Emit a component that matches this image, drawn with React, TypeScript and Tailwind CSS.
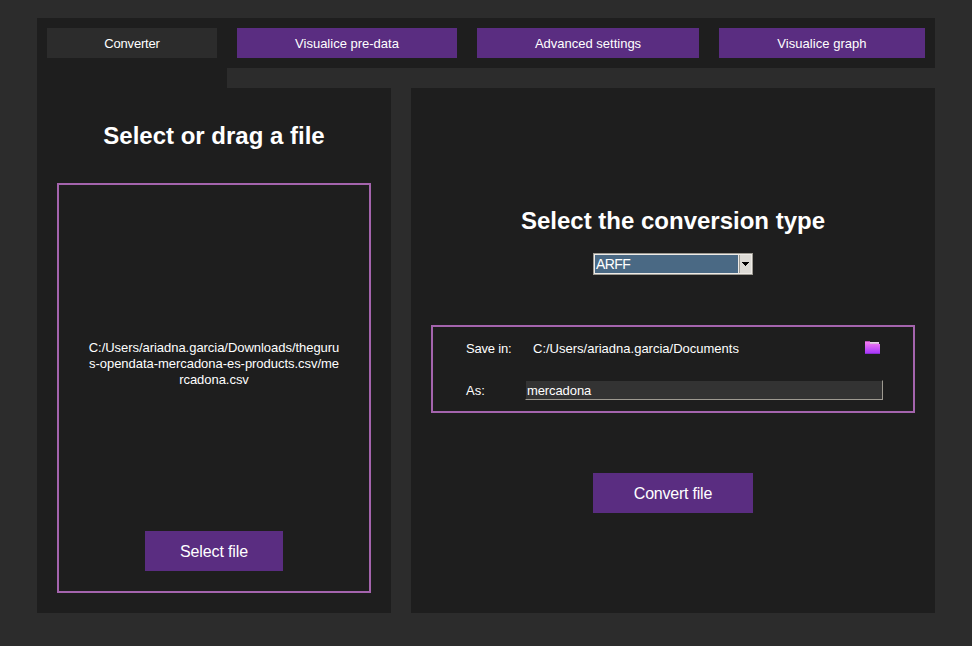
import React from "react";

const tabs = [
  { label: "Converter", style: "w-[170px] bg-[#2c2c2c] tracking-[-0.17px]" },
  { label: "Visualice pre-data", style: "w-[220px] bg-[#5a2d81]" },
  { label: "Advanced settings", style: "w-[222px] bg-[#5a2d81]" },
  { label: "Visualice graph", style: "w-[206px] bg-[#5a2d81] tracking-[0.04px]" },
];

function FolderIcon() {
  return (
    <svg className="mt-px" width="15" height="13" viewBox="0 0 15 13" shapeRendering="crispEdges">
      <defs>
        <linearGradient id="folder" x1="0" y1="0" x2="0" y2="1">
          <stop offset="0" stopColor="#f47cf0" />
          <stop offset="1" stopColor="#a838fa" />
        </linearGradient>
      </defs>
      <path d="M0 1h5v2h10v9H0z" fill="url(#folder)" />
      <path d="M0 0h5v1H0z" fill="#b552b8" />
      <path d="M5 1h9v1H5z" fill="#e6d3e8" />
      <path d="M5 2h9v1H5z" fill="#d9b5dc" />
      <path d="M0 12h15v1H0z" fill="#8a2fd0" />
    </svg>
  );
}

export default function App() {
  return (
    <div className="h-[646px] w-[972px] overflow-hidden bg-[#2c2c2c] pt-[18px] pl-[37px] font-['Liberation_Sans',Arial,sans-serif] text-[13px] leading-4 text-white">
      <div className="w-[898px]">
        <nav className="flex h-[50px] gap-5 bg-[#1e1e1e] p-2.5">
          {tabs.map((t) => (
            <button key={t.label} className={`h-[30px] shrink-0 pt-0.5 ${t.style}`}>
              {t.label}
            </button>
          ))}
        </nav>
        <div className="h-5 w-[190px] bg-[#1e1e1e]" />
        <main className="flex h-[525px] gap-5">
          <section className="flex w-[354px] flex-col bg-[#1e1e1e] px-5 pb-5">
            <h1 className="flex h-[95px] items-center justify-center text-2xl font-bold whitespace-nowrap">
              Select or drag a file
            </h1>
            <div className="flex h-[410px] flex-col items-center border-2 border-[#a464ad]">
              <p className="mt-[155px] text-center tracking-[-0.04px] whitespace-nowrap">
                C:/Users/ariadna.garcia/Downloads/theguru
                <br />
                s-opendata-mercadona-es-products.csv/me
                <br />
                rcadona.csv
              </p>
              <button className="mt-auto mb-5 h-10 w-[138px] bg-[#5a2d81] pt-0.5 text-base tracking-[-0.12px]">
                Select file
              </button>
            </div>
          </section>
          <section className="flex w-[524px] flex-col items-center bg-[#1e1e1e] px-5">
            <h1 className="mt-[117px] text-2xl leading-8 font-bold whitespace-nowrap">
              Select the conversion type
            </h1>
            <div className="mt-[16px] flex h-[22px] w-40 border border-[#9d9a92] bg-[#eeebe7] p-px">
              <div className="flex w-[143px] items-center bg-[#4a6984] pl-px text-[14px] tracking-[-0.6px]">ARFF</div>
              <div className="ml-px flex flex-1 items-center justify-center border-l border-[#9d9a92] bg-[#dcdad5]">
                <svg width="7" height="4" viewBox="0 0 7 4" shapeRendering="crispEdges">
                  <path d="M0 0h7v1H6v1H5v1H4v1H3V3H2V2H1V1H0z" fill="#000" />
                </svg>
              </div>
            </div>
            <div className="mt-[50px] h-[88px] w-full border-2 border-[#a464ad] pl-[33px]">
              <div className="mt-[13px] flex h-4 items-start">
                <span className="w-[67px] pt-px tracking-[-0.2px]">Save in:</span>
                <span className="w-[332px] pt-px">C:/Users/ariadna.garcia/Documents</span>
                <FolderIcon />
              </div>
              <div className="mt-[24px] flex h-5 items-center">
                <label htmlFor="name" className="w-[59px] pt-0.5">As:</label>
                <input
                  id="name"
                  defaultValue="mercadona"
                  className="h-5 w-[358px] border border-t-[#1e1e1e] border-r-[#9e9a91] border-b-[#9e9a91] border-l-[#1e1e1e] bg-[#333333] pl-px tracking-[-0.1px] outline-none"
                />
              </div>
            </div>
            <button className="mt-[60px] h-10 w-40 bg-[#5a2d81] pt-0.5 text-base tracking-[-0.22px]">Convert file</button>
          </section>
        </main>
      </div>
    </div>
  );
}
